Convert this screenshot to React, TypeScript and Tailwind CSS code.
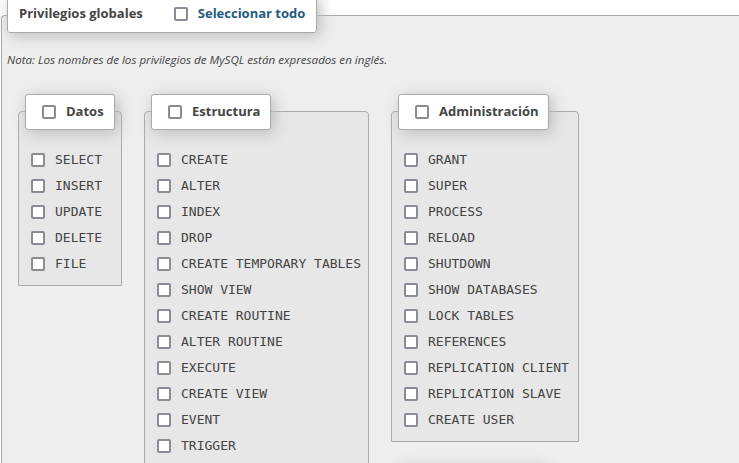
const datos = ['SELECT', 'INSERT', 'UPDATE', 'DELETE', 'FILE']

const estructura = [
  'CREATE',
  'ALTER',
  'INDEX',
  'DROP',
  'CREATE TEMPORARY TABLES',
  'SHOW VIEW',
  'CREATE ROUTINE',
  'ALTER ROUTINE',
  'EXECUTE',
  'CREATE VIEW',
  'EVENT',
  'TRIGGER',
]

const administracion = [
  'GRANT',
  'SUPER',
  'PROCESS',
  'RELOAD',
  'SHUTDOWN',
  'SHOW DATABASES',
  'LOCK TABLES',
  'REFERENCES',
  'REPLICATION CLIENT',
  'REPLICATION SLAVE',
  'CREATE USER',
]

function Box() {
  return (
    <span className="block w-[14px] h-[14px] flex-shrink-0 border-2 border-[#8d8a97] rounded-[2px] bg-white" />
  )
}

function Group({
  title,
  items,
  width,
  legendWidth,
}: {
  title?: string
  items: string[]
  width: string
  legendWidth: string
}) {
  return (
    <div className={`${width} border border-[#aaa] rounded-t-[4px] bg-[#e7e7e7] pb-[8px]`}>
      {/* Leyenda sobre el borde superior, como en el fieldset original */}
      <div
        className={`${legendWidth} h-[36px] -mt-[18px] ml-[6px] flex items-center gap-[10px] pl-[16px] bg-white border border-[#aaa] rounded-[3px] shadow-[3px_3px_15px_#bbb]`}
      >
        {title && (
          <>
            <Box />
            <span className="text-[13px] font-bold text-[#444]">{title}</span>
          </>
        )}
      </div>
      <ul className="pt-[17px] pl-[12px]">
        {items.map((item) => (
          <li key={item} className="h-[26px] flex items-center gap-[10px]">
            <Box />
            <span className="font-['DejaVu_Sans_Mono',monospace] text-[13px] text-[#444] whitespace-nowrap">
              {item}
            </span>
          </li>
        ))}
      </ul>
    </div>
  )
}

export default function App() {
  return (
    <div className="h-[463px] overflow-hidden bg-white pt-[15px] font-['Open_Sans',sans-serif]">
      <div className="ml-px h-[600px] border-t border-l border-[#aaa] rounded-tl-[4px] bg-[#eee]">
        <div className="w-[310px] h-[38px] -mt-[21px] ml-[5px] flex items-center pl-[11px] bg-white border border-[#aaa] rounded-[3px] shadow-[3px_3px_15px_#bbb]">
          <span className="text-[13px] font-bold text-[#444]">Privilegios globales</span>
          <span className="ml-[31px] flex items-center gap-[10px]">
            <Box />
            <span className="text-[13px] font-bold text-[#235a81]">Seleccionar todo</span>
          </span>
        </div>

        <p className="mt-[19px] pl-[5px] text-[11.6px] leading-[16px] italic text-[#444]">
          Nota: Los nombres de los privilegios de MySQL están expresados en inglés.
        </p>

        <div className="mt-[43px] pl-[16px] flex items-start gap-[22px]">
          <Group title="Datos" items={datos} width="w-[104px]" legendWidth="w-[90px]" />
          <Group title="Estructura" items={estructura} width="w-[225px]" legendWidth="w-[120px]" />
          <div className="flex flex-col gap-[40px]">
            <Group
              title="Administración"
              items={administracion}
              width="w-[188px]"
              legendWidth="w-[151px]"
            />
            <Group items={[]} width="w-[188px]" legendWidth="w-[148px]" />
          </div>
        </div>
      </div>
    </div>
  )
}
